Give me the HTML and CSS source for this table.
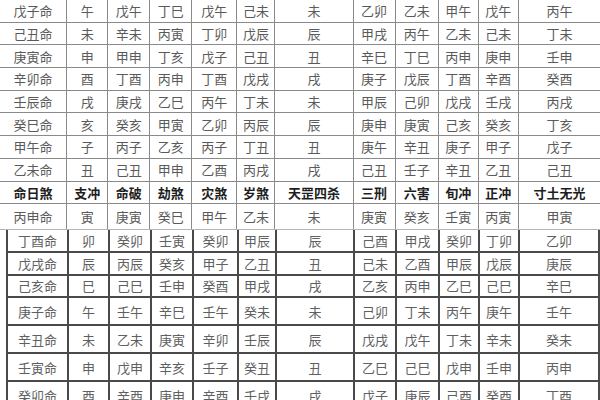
FILE: index.html
```html
<!DOCTYPE html>
<html lang="zh-CN">
<head>
<meta charset="utf-8">
<link rel="stylesheet" href="styles.css">
</head>
<body>
<div class="sheet">
<table class="grid grid-top">
<colgroup>
<col class="c1"><col class="c2"><col class="c3"><col class="c4"><col class="c5"><col class="c6"><col class="c7"><col class="c8"><col class="c9"><col class="c10"><col class="c11"><col class="c12">
</colgroup>
<tbody>
<tr><td>戊子命</td><td>午</td><td>戊午</td><td>丁巳</td><td>戊午</td><td>己未</td><td>未</td><td>乙卯</td><td>乙未</td><td>甲午</td><td>戊午</td><td>丙午</td></tr>
<tr><td>己丑命</td><td>未</td><td>辛未</td><td>丙寅</td><td>丁卯</td><td>戊辰</td><td>辰</td><td>甲戌</td><td>丙午</td><td>乙未</td><td>己未</td><td>丁未</td></tr>
<tr><td>庚寅命</td><td>申</td><td>甲申</td><td>丁亥</td><td>戊子</td><td>己丑</td><td>丑</td><td>辛巳</td><td>丁巳</td><td>丙申</td><td>庚申</td><td>壬申</td></tr>
<tr><td>辛卯命</td><td>酉</td><td>丁酉</td><td>丙申</td><td>丁酉</td><td>戊戌</td><td>戌</td><td>庚子</td><td>戊辰</td><td>丁酉</td><td>辛酉</td><td>癸酉</td></tr>
<tr><td>壬辰命</td><td>戌</td><td>庚戌</td><td>乙巳</td><td>丙午</td><td>丁未</td><td>未</td><td>甲辰</td><td>己卯</td><td>戊戌</td><td>壬戌</td><td>丙戌</td></tr>
<tr><td>癸巳命</td><td>亥</td><td>癸亥</td><td>甲寅</td><td>乙卯</td><td>丙辰</td><td>辰</td><td>庚申</td><td>庚寅</td><td>己亥</td><td>癸亥</td><td>丁亥</td></tr>
<tr><td>甲午命</td><td>子</td><td>丙子</td><td>乙亥</td><td>丙子</td><td>丁丑</td><td>丑</td><td>庚午</td><td>辛丑</td><td>庚子</td><td>甲子</td><td>戊子</td></tr>
<tr><td>乙未命</td><td>丑</td><td>己丑</td><td>甲申</td><td>乙酉</td><td>丙戌</td><td>戌</td><td>己丑</td><td>壬子</td><td>辛丑</td><td>乙丑</td><td>己丑</td></tr>
<tr class="head"><td>命日煞</td><td>支冲</td><td>命破</td><td>劫煞</td><td>灾煞</td><td>岁煞</td><td>天罡四杀</td><td>三刑</td><td>六害</td><td>旬冲</td><td>正冲</td><td>寸土无光</td></tr>
<tr class="last"><td>丙申命</td><td>寅</td><td>庚寅</td><td>癸巳</td><td>甲午</td><td>乙未</td><td>未</td><td>庚寅</td><td>癸亥</td><td>壬寅</td><td>丙寅</td><td>甲寅</td></tr>
</tbody>
</table>
<table class="grid grid-bottom">
<colgroup>
<col class="d1"><col class="c2"><col class="c3"><col class="c4"><col class="c5"><col class="c6"><col class="c7"><col class="c8"><col class="c9"><col class="c10"><col class="c11"><col class="d12">
</colgroup>
<tbody>
<tr class="first"><td>丁酉命</td><td>卯</td><td>癸卯</td><td>壬寅</td><td>癸卯</td><td>甲辰</td><td>辰</td><td>己酉</td><td>甲戌</td><td>癸卯</td><td>丁卯</td><td>乙卯</td></tr>
<tr><td>戊戌命</td><td>辰</td><td>丙辰</td><td>癸亥</td><td>甲子</td><td>乙丑</td><td>丑</td><td>己未</td><td>乙酉</td><td>甲辰</td><td>戊辰</td><td>庚辰</td></tr>
<tr><td>己亥命</td><td>巳</td><td>己巳</td><td>壬申</td><td>癸酉</td><td>甲戌</td><td>戌</td><td>乙亥</td><td>丙申</td><td>乙巳</td><td>己巳</td><td>辛巳</td></tr>
<tr class="tall"><td>庚子命</td><td>午</td><td>壬午</td><td>辛巳</td><td>壬午</td><td>癸未</td><td>未</td><td>己卯</td><td>丁未</td><td>丙午</td><td>庚午</td><td>壬午</td></tr>
<tr class="tall"><td>辛丑命</td><td>未</td><td>乙未</td><td>庚寅</td><td>辛卯</td><td>壬辰</td><td>辰</td><td>戊戌</td><td>戊午</td><td>丁未</td><td>辛未</td><td>癸未</td></tr>
<tr class="tall"><td>壬寅命</td><td>申</td><td>戊申</td><td>辛亥</td><td>壬子</td><td>癸丑</td><td>丑</td><td>乙巳</td><td>己巳</td><td>戊申</td><td>壬申</td><td>丙申</td></tr>
<tr class="tall"><td>癸卯命</td><td>酉</td><td>辛酉</td><td>庚申</td><td>辛酉</td><td>壬戌</td><td>戌</td><td>戊子</td><td>庚辰</td><td>己酉</td><td>癸酉</td><td>丁酉</td></tr>
</tbody>
</table>
</div>
</body>
</html>
```

FILE: styles.css
```css
html, body {
  margin: 0;
  padding: 0;
  background: #fff;
}
.sheet {
  width: 600px;
  height: 400px;
  overflow: hidden;
  font-family: "Noto Sans CJK SC", "Noto Sans CJK TC", sans-serif;
  font-size: 13px;
  color: #5a5a5a;
}
.grid {
  border-collapse: collapse;
  table-layout: fixed;
}
.grid td {
  padding: 0;
  text-align: center;
  vertical-align: middle;
  white-space: nowrap;
  overflow: hidden;
  line-height: 1;
}
.grid-top {
  width: 602px;
  margin-top: -1px;
  margin-left: -1px;
}
.grid-top td {
  border: 1px solid #8a8a8a;
  height: 21.7px;
}
.grid-top tr.last td {
  height: 25px;
  border-bottom: 1px solid #b4b4b4;
}
.grid-top .head td {
  font-weight: bold;
  color: #1e1e1e;
}
.c1 { width: 67px; }
.c2 { width: 41px; }
.c3 { width: 42px; }
.c4 { width: 42px; }
.c5 { width: 45px; }
.c6 { width: 38px; }
.c7 { width: 78px; }
.c8 { width: 42px; }
.c9 { width: 43px; }
.c10 { width: 40px; }
.c11 { width: 40px; }
.c12 { width: 82px; }
.d1 { width: 61px; }
.d12 { width: 80px; }
.grid-bottom {
  width: 592px;
  margin-left: 6px;
}
.grid-bottom td {
  border: 2px solid #4a4a4a;
  height: 20.5px;
  color: #606060;
}
.grid-bottom tr.first td {
  border-top: 0;
  height: 21px;
}
.grid-bottom tr.tall td {
  height: 26px;
}
```
